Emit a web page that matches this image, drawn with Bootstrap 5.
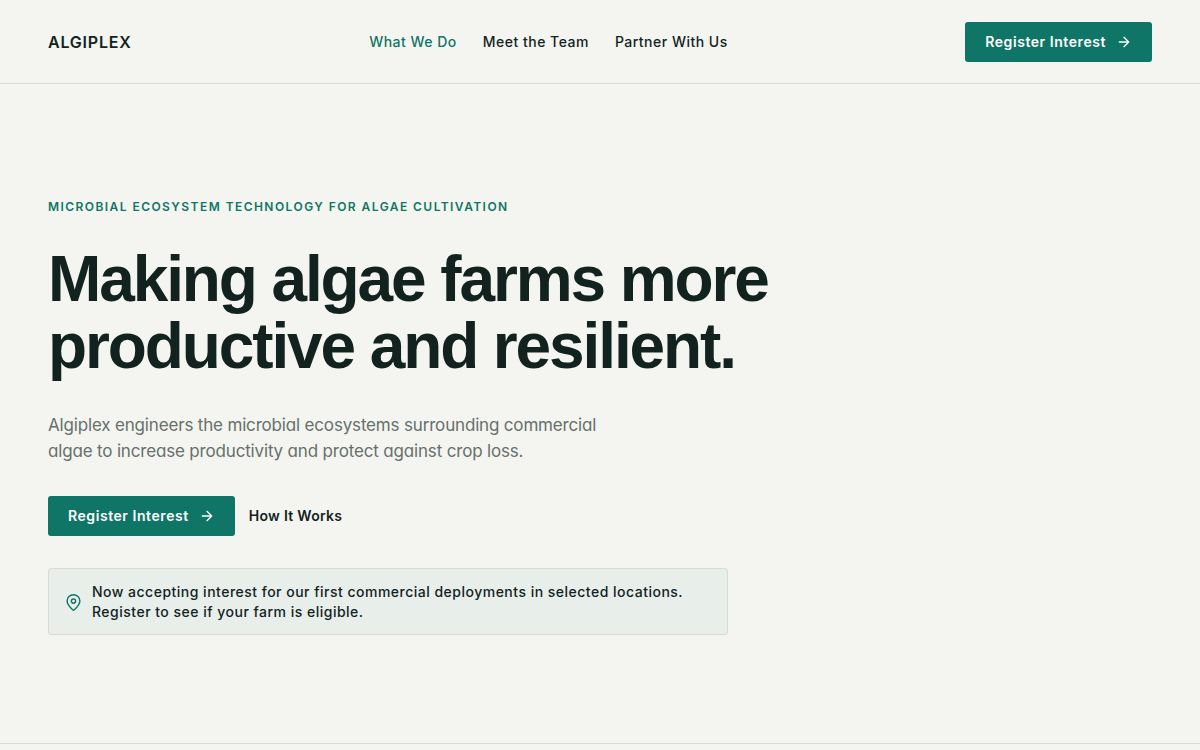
<!DOCTYPE html>
<html lang="en">
<head>
<meta charset="utf-8">
<meta name="viewport" content="width=device-width, initial-scale=1">
<title>Algiplex</title>
<link href="https://cdn.jsdelivr.net/npm/bootstrap@5.3.0/dist/css/bootstrap.min.css" rel="stylesheet">
<style>
:root { --ink: #12231f; --brand: #0f7566; --line: #d5dbd6; --paper: #f4f5f0; }
body { background: var(--paper); color: var(--ink); font-family: Inter, sans-serif; font-size: 14px; line-height: 20px; }
.gutter { padding-left: 48px; padding-right: 48px; }
.site-header { border-bottom: 1px solid var(--line); padding-top: 22px; padding-bottom: 21px; }
.brand { font-size: 16px; font-weight: 600; letter-spacing: .05em; color: var(--ink); padding-bottom: 1px; }
.site-nav { gap: 26px; }
.site-nav a { color: var(--ink); font-weight: 500; letter-spacing: .035em; }
.site-nav a.active { color: var(--brand); }
.btn-brand { --bs-btn-color: #fff; --bs-btn-bg: var(--brand); --bs-btn-hover-color: #fff; --bs-btn-hover-bg: #0b5f53; --bs-btn-active-bg: #0b5f53; --bs-btn-active-color: #fff; border: 0; border-radius: 3px; height: 40px; padding: 0 20px 1px; font-size: 14px; font-weight: 600; letter-spacing: .04em; gap: 10px; }
.hero { padding-top: 113px; padding-bottom: 108px; border-bottom: 1px solid var(--line); }
.eyebrow { font-size: 12px; line-height: 20px; font-weight: 600; letter-spacing: .12em; color: var(--brand); margin-bottom: 29px; }
.headline { font-family: "Liberation Sans", Arial, sans-serif; font-size: 64px; line-height: 67px; font-weight: 700; letter-spacing: -.033em; max-width: 800px; margin-bottom: 32px; }
.intro { font-size: 17px; line-height: 26px; color: #66706c; max-width: 580px; margin-bottom: 32px; font-feature-settings: "cv11"; letter-spacing: -.01em; }
.notice { max-width: 680px; background: #e8eeea; border: 1px solid var(--line); border-radius: 3px; padding: 13px 16px 12px; gap: 10px; font-weight: 500; letter-spacing: .035em; margin-top: 32px; }
.actions { gap: 14px; }
.text-action { color: var(--ink); font-weight: 600; letter-spacing: .02em; }
</style>
</head>
<body>
<header class="site-header gutter d-flex flex-wrap gap-3 justify-content-between align-items-center">
  <a class="brand text-decoration-none" href="#">ALGIPLEX</a>
  <nav class="site-nav d-flex" aria-label="Main">
    <a class="active text-decoration-none" href="#">What We Do</a>
    <a class="text-decoration-none" href="#">Meet the Team</a>
    <a class="text-decoration-none" href="#">Partner With Us</a>
  </nav>
  <button type="button" class="btn btn-brand d-inline-flex align-items-center">Register Interest
    <svg width="16" height="16" viewBox="0 0 24 24" fill="none" stroke="currentColor" stroke-width="2" stroke-linecap="round" stroke-linejoin="round" aria-hidden="true"><path d="M5 12h14M12 5l7 7-7 7"/></svg>
  </button>
</header>
<main>
  <section class="hero gutter">
    <p class="eyebrow text-uppercase">Microbial ecosystem technology for algae cultivation</p>
    <h1 class="headline">Making algae farms more productive and resilient.</h1>
    <p class="intro">Algiplex engineers the microbial ecosystems surrounding commercial algae to increase productivity and protect against crop loss.</p>
    <div class="actions d-flex align-items-center">
      <button type="button" class="btn btn-brand d-inline-flex align-items-center">Register Interest
        <svg width="16" height="16" viewBox="0 0 24 24" fill="none" stroke="currentColor" stroke-width="2" stroke-linecap="round" stroke-linejoin="round" aria-hidden="true"><path d="M5 12h14M12 5l7 7-7 7"/></svg>
      </button>
      <a class="text-action text-decoration-none" href="#">How It Works</a>
    </div>
    <div class="notice d-flex align-items-center">
      <svg class="flex-shrink-0" width="17" height="17" viewBox="0 0 24 24" fill="none" stroke="#0f7566" stroke-width="2" stroke-linecap="round" stroke-linejoin="round" aria-hidden="true"><path d="M21 10c0 5.500-5.500 10.200-8.200 12.500a1.200 1.200 0 0 1-1.600 0C8.500 20.200 3 15.500 3 10a9 9 0 0 1 18 0"/><circle cx="12" cy="10" r="3"/></svg>
      <span>Now accepting interest for our first commercial deployments in selected locations. Register to see if your farm is eligible.</span>
    </div>
  </section>
</main>
<script src="https://cdn.jsdelivr.net/npm/bootstrap@5.3.0/dist/js/bootstrap.bundle.min.js"></script>
</body>
</html>
